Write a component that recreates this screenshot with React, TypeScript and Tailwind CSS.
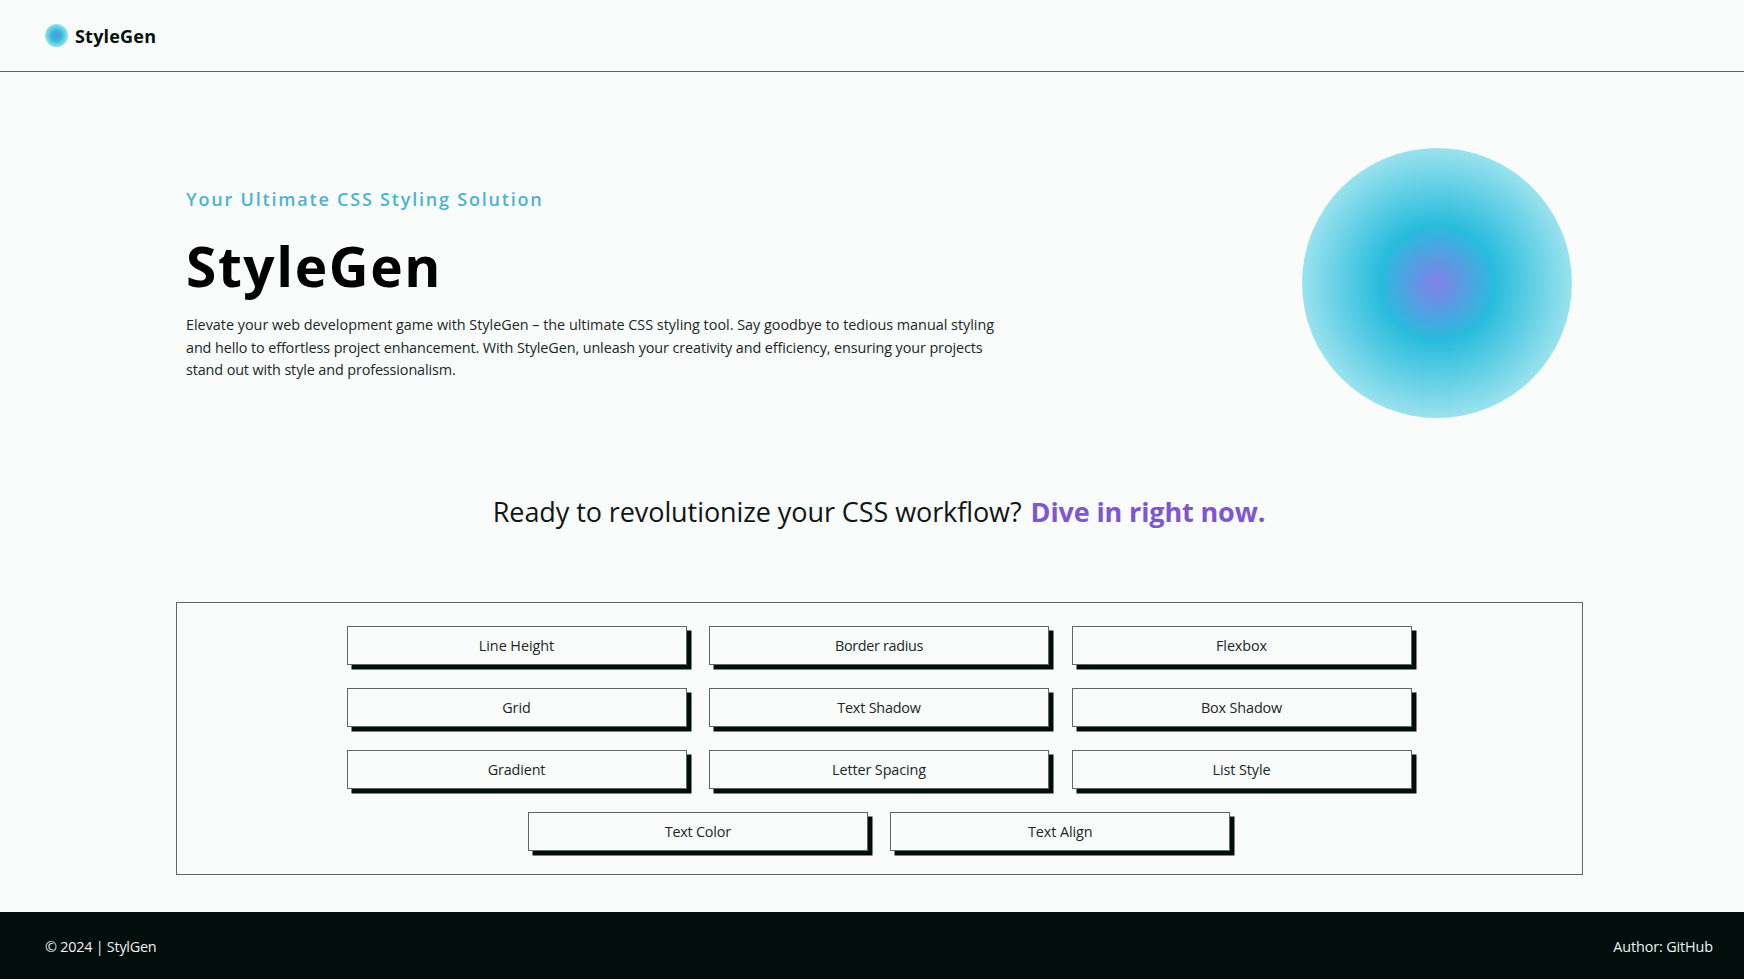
const tools = [
  { name: 'Line Height', tracking: 'tracking-[-0.05px]' },
  { name: 'Border radius', tracking: 'tracking-[-0.32px]' },
  { name: 'Flexbox', tracking: 'tracking-[-0.1px]' },
  { name: 'Grid', tracking: 'tracking-[-0.05px]' },
  { name: 'Text Shadow', tracking: 'tracking-[-0.2px]' },
  { name: 'Box Shadow', tracking: 'tracking-[-0.14px]' },
  { name: 'Gradient', tracking: 'tracking-[-0.15px]' },
  { name: 'Letter Spacing', tracking: 'tracking-[-0.1px]' },
  { name: 'List Style', tracking: 'tracking-[-0.1px]' },
  { name: 'Text Color', tracking: 'tracking-[-0.22px]' },
  { name: 'Text Align', tracking: 'tracking-[-0.1px]' },
];

function Orb({ className }: { className: string }) {
  return (
    <div
      className={`shrink-0 rounded-full bg-[radial-gradient(circle,#8280e8_0%,#28bcdd_30%,#a6e6f0_75%)] ${className}`}
    />
  );
}

export default function App() {
  return (
    <div className="flex h-[979px] flex-col overflow-hidden bg-[#fafcfb] font-['Open_Sans','Noto_Sans',sans-serif] text-[14.4px] text-[#202626]">
      <header className="flex h-[72px] shrink-0 items-center border-b border-[#606866] pl-[45px]">
        <Orb className="size-[23px]" />
        <span className="ml-[7px] text-[18px] leading-6 font-bold tracking-[0.2px] text-[#04100e]">StyleGen</span>
      </header>

      <main className="flex flex-1 flex-col items-center pl-[14px]">
        <section className="mt-[75.5px] flex h-[270px] w-[1407px] justify-between pr-[10.5px] pl-[10.5px]">
          <div className="flex flex-col whitespace-nowrap">
            <h2 className="mt-[37.5px] text-[18px] leading-[28px] font-semibold tracking-[1.8px] text-[#48b4d3]">
              Your Ultimate CSS Styling Solution
            </h2>
            <h1 className="mt-[15px] text-[55px] leading-[76px] font-bold tracking-[1.6px] text-black">StyleGen</h1>
            <p className="mt-[10px] leading-[22.5px]">
              <span className="block tracking-[-0.01px]">Elevate your web development game with StyleGen – the ultimate CSS styling tool. Say goodbye to tedious manual styling</span>
              <span className="block tracking-[-0.1px]">and hello to effortless project enhancement. With StyleGen, unleash your creativity and efficiency, ensuring your projects</span>
              <span className="block tracking-[-0.12px]">stand out with style and professionalism.</span>
            </p>
          </div>
          <Orb className="size-[270px]" />
        </section>

        <p className="mt-[74.5px] flex gap-[9px] text-[27px] leading-[40px] whitespace-nowrap text-[#111615]">
          <span className="tracking-[-0.08px]">Ready to revolutionize your CSS workflow?</span>
          <strong className="font-bold tracking-[-0.13px] text-[#7c56d6]">Dive in right now.</strong>
        </p>

        <section className="mt-[70px] flex h-[273px] w-[1407px] flex-wrap content-start justify-center gap-x-[22.5px] gap-y-[22.5px] border border-[#606866] px-[160px] pt-[22.6px]">
          {tools.map(({ name, tracking }) => (
            <button
              key={name}
              className={`h-[39.5px] w-[340px] border border-[#606866] bg-[#fafcfb] pt-[1px] text-center leading-[36px] shadow-[4.5px_4.5px_0_#020d0c] ${tracking}`}
            >
              {name}
            </button>
          ))}
        </section>
      </main>

      <footer className="flex h-[67px] shrink-0 items-center justify-between bg-[#020d0c] pt-[2px] pr-[31px] pl-[45px] text-[#eef3f2]">
        <span className="tracking-[-0.24px]">© 2024 | StylGen</span>
        <span className="tracking-[-0.12px]">Author: GitHub</span>
      </footer>
    </div>
  );
}
